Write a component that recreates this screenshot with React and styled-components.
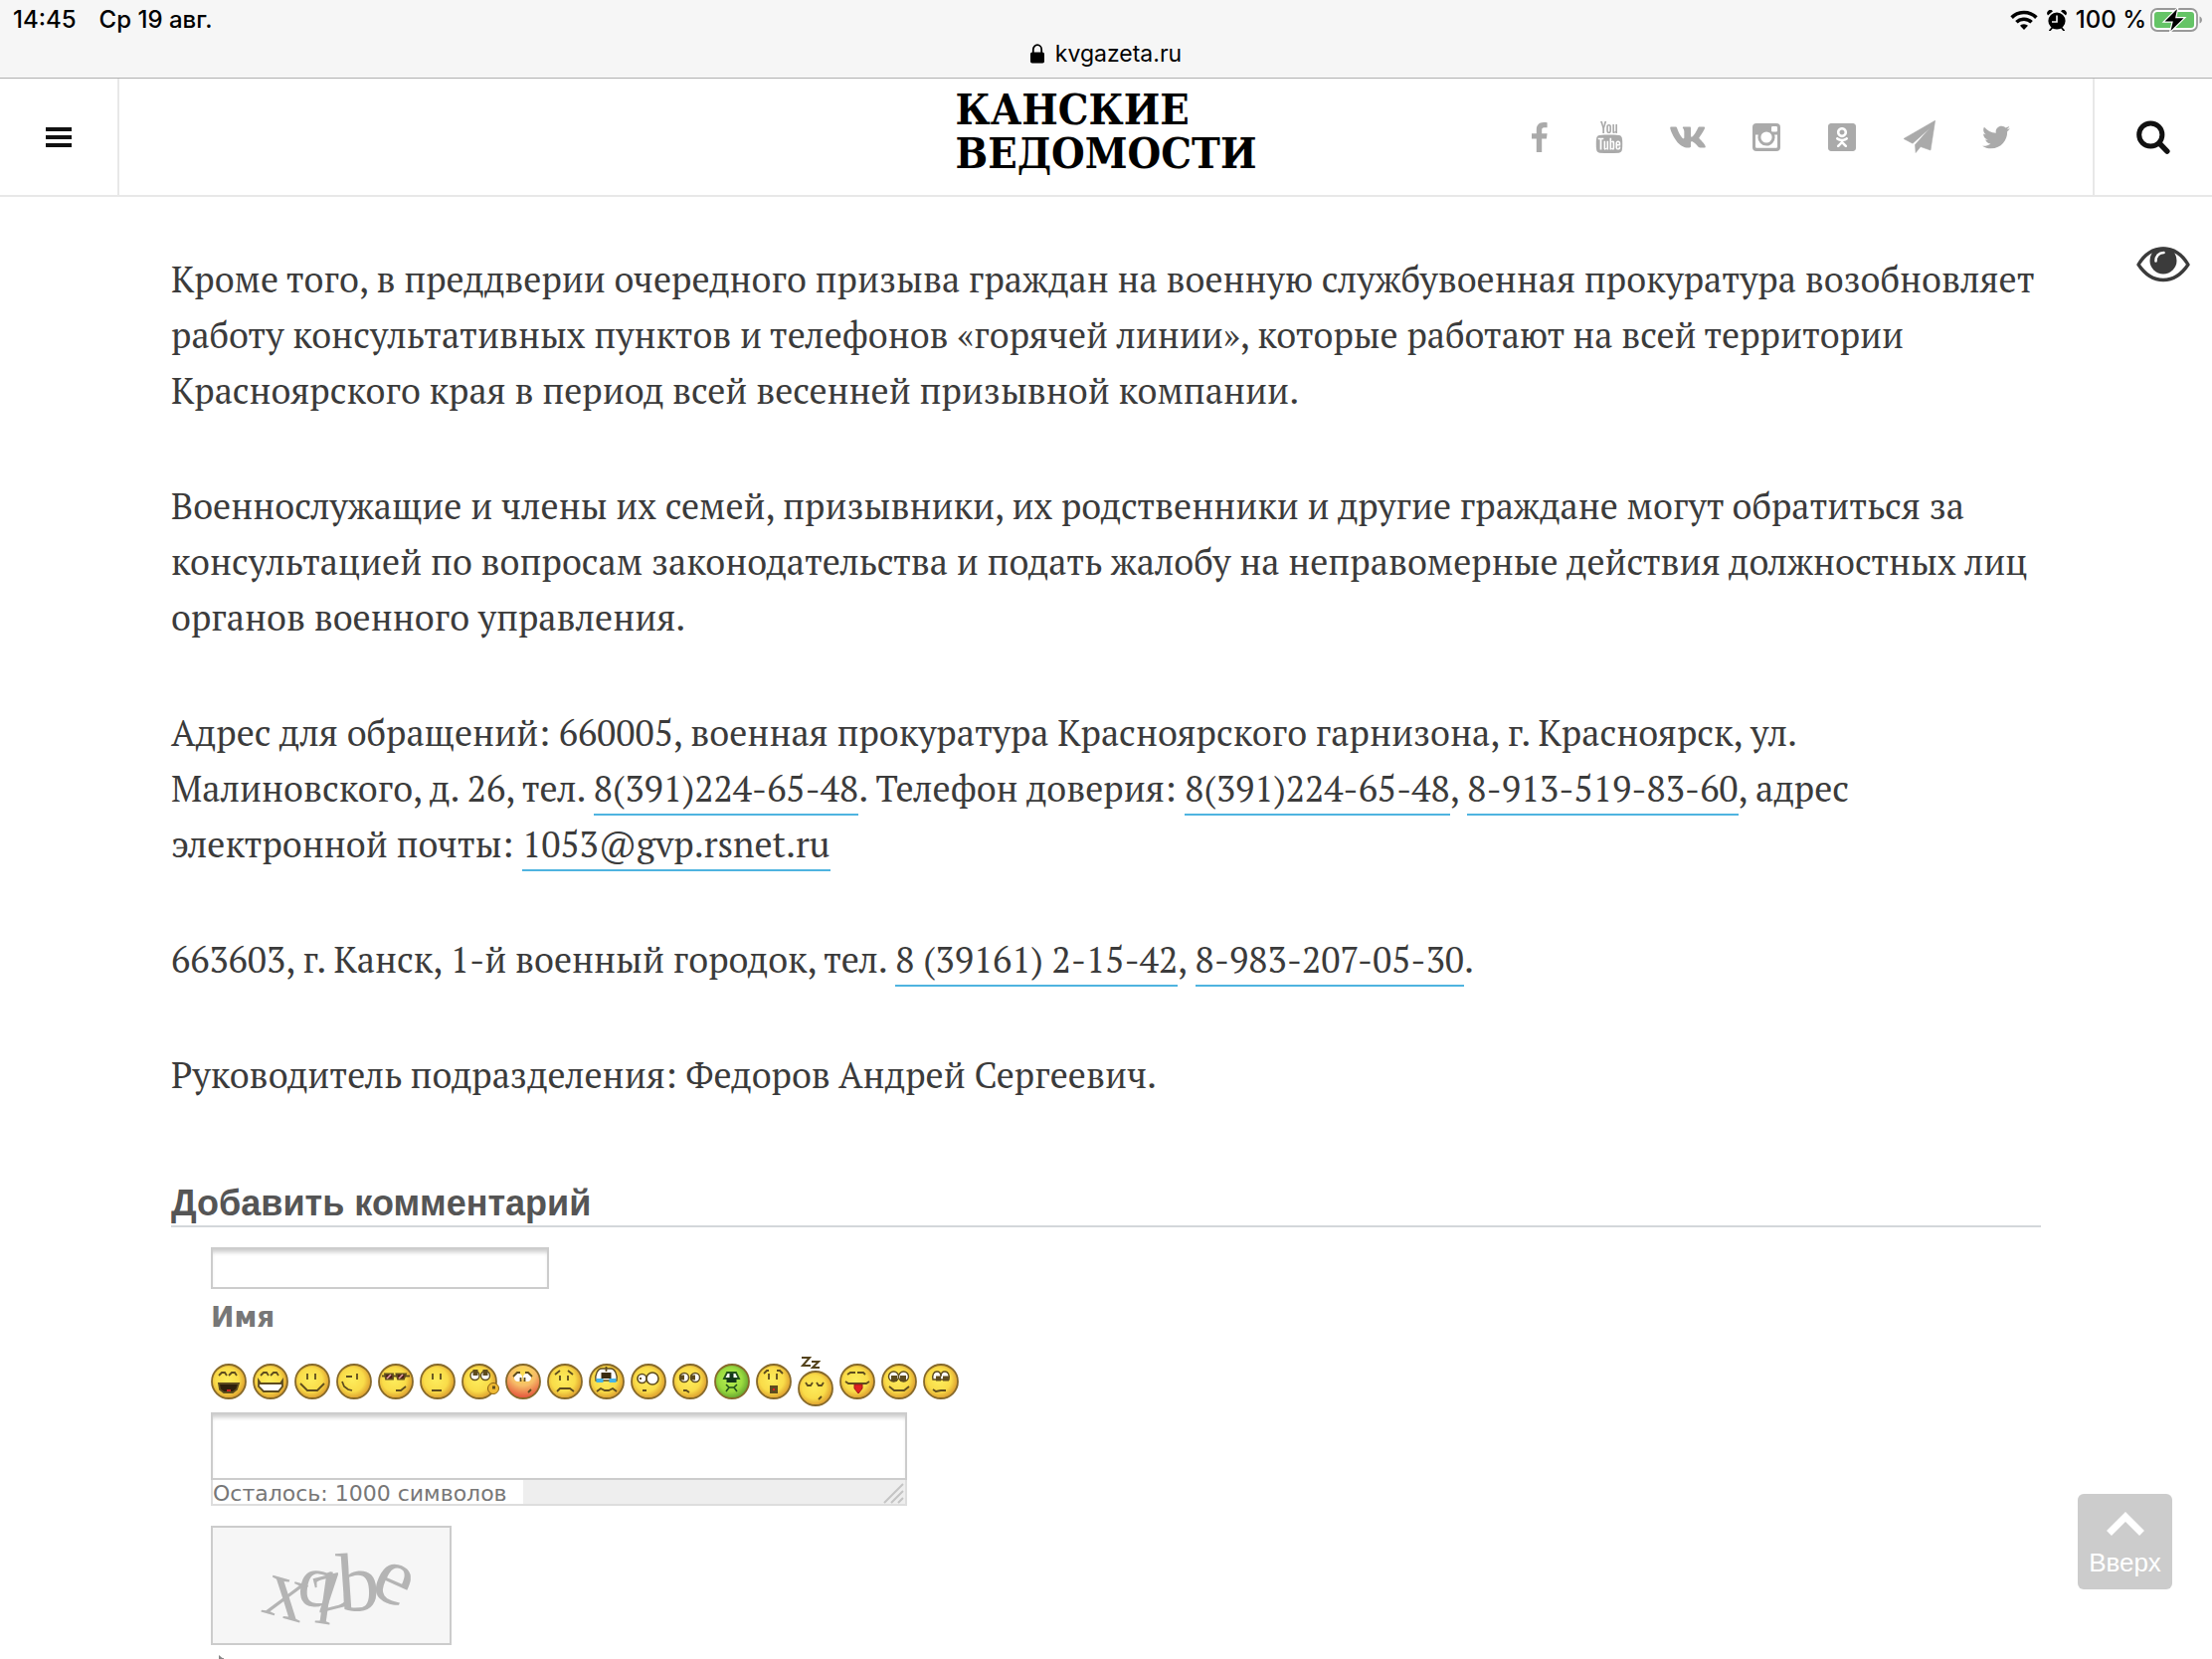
import styled, { createGlobalStyle } from "styled-components";
import { FaOdnoklassnikiSquare, FaTwitter, FaVk } from "react-icons/fa";
import { TfiYoutube } from "react-icons/tfi";

const GlobalStyle = createGlobalStyle`
    * {
        box-sizing: border-box;
    }
    body {
        margin: 0;
        background: #fff;
    }
    button {
        padding: 0;
        border: 0;
        background: none;
        cursor: pointer;
    }
`;

const WifiIcon = () => (
    <svg width="28" height="20" viewBox="0 0 28 20">
        <g fill="none" stroke="#000" strokeWidth="3.6">
            <path d="M1.6 7.6a17.6 17.6 0 0 1 24.8 0" />
            <path d="M6.4 12.3a11 11 0 0 1 15.2 0" />
        </g>
        <path d="M14 20l-4-4.2a5.8 5.8 0 0 1 8 0z" />
    </svg>
);

const AlarmIcon = () => (
    <svg width="20" height="21" viewBox="0 0 20 21">
        <path d="M1 5.4A3.2 3.2 0 0 1 6 1.2zM19 5.4A3.2 3.2 0 0 0 14 1.2z" />
        <path d="M3 20.5l3-3.5M17 20.5l-3-3.5" stroke="#000" strokeWidth="1.8" strokeLinecap="round" />
        <circle cx="10" cy="11" r="8.6" />
        <path d="M10 5.5V12H5" fill="none" stroke="#f6f6f6" strokeWidth="1.6" />
    </svg>
);

const BatteryIcon = () => (
    <svg width="53" height="26" viewBox="0 0 53 26">
        <rect x="1" y="2" width="46" height="22" rx="6" fill="#fff" stroke="#999" strokeWidth="1.8" />
        <rect x="4" y="5" width="40" height="16" rx="3" fill="#65c466" />
        <path d="M49.5 9.5c3.3 1.2 3.3 5.8 0 7z" fill="#999" />
        <path
            d="M27 2L14.5 14.5h8.3L20.5 24 33.5 11.2h-8.4z"
            fill="#000"
            stroke="#fff"
            strokeWidth="2.4"
            paintOrder="stroke"
        />
    </svg>
);

const LockIcon = () => (
    <svg width="14" height="20" viewBox="0 0 14 20">
        <rect x="0" y="8.5" width="14" height="11" rx="1.8" />
        <path d="M2.8 9V5.8a4.2 4.6 0 0 1 8.4 0V9" fill="none" stroke="#000" strokeWidth="1.8" />
    </svg>
);

const MenuIcon = () => (
    <svg width="26" height="20" viewBox="0 0 26 20" fill="#111">
        <path d="M0 0h26v4H0zM0 8h26v4H0zM0 16h26v4H0z" />
    </svg>
);

const SearchIcon = () => (
    <svg width="34" height="34" viewBox="0 0 34 34" fill="none" stroke="#111">
        <circle cx="14.3" cy="14.5" r="11.6" strokeWidth="5" />
        <path d="M23.5 23.5l7.4 7.6" strokeWidth="5.4" strokeLinecap="round" />
    </svg>
);

const FacebookIcon = () => (
    <svg width="16" height="30" viewBox="0 0 16 30" fill="currentColor">
        <path d="M15.6.3v5h-3c-2 0-2.4 1-2.4 2.6v3.4h5.4l-.7 5.2h-4.7v13.4H4.8V16.5H0v-5.2h4.8V7.5C4.8 2.7 7.6 0 12 0c1.6 0 3 .1 3.6.3z" />
    </svg>
);

const InstagramIcon = () => (
    <svg width="28" height="28" viewBox="0 0 28 28">
        <rect width="28" height="28" rx="4" fill="currentColor" />
        <path d="M3 11.5h22v12q0 1.2-1.2 1.2H4.2q-1.2 0-1.2-1.2z" fill="#fff" />
        <circle cx="14" cy="14" r="8.6" fill="currentColor" />
        <circle cx="14" cy="14" r="5.6" fill="#fff" />
        <rect x="19" y="3" width="6" height="5.6" rx="1.3" fill="#fff" />
    </svg>
);

const PlaneIcon = () => (
    <svg width="32" height="33" viewBox="0 0 32 33" fill="currentColor">
        <path
            d="M31.6.3L0 18.5 9 23.2 26.7 7.5 11.5 24.5l.6 8 4.9-6L27 30z"
            strokeWidth=".6"
            stroke="currentColor"
            strokeLinejoin="round"
        />
    </svg>
);

const EyeIcon = () => (
    <svg width="54" height="36" viewBox="0 0 54 36">
        <path
            d="M2 18C8 8 17 2 27 2s19 6 25 16c-6 9-15 15.5-25 15.5S8 27 2 18z"
            fill="#fff"
            stroke="#3b3b3b"
            strokeWidth="3.4"
            strokeLinejoin="round"
        />
        <circle cx="27" cy="14" r="13.5" fill="#3b3b3b" />
        <path d="M19.5 14.5C19.5 9.5 22.5 6 27.5 6" fill="none" stroke="#fff" strokeWidth="2.6" strokeLinecap="round" />
    </svg>
);

const ArrowUpIcon = () => (
    <svg width="38" height="25" viewBox="0 0 38 25">
        <path d="M2.5 21.5L19 5l16.5 16.5" fill="none" stroke="#fff" strokeWidth="7" />
    </svg>
);

const RefreshIcon = () => (
    <svg width="26" height="28" viewBox="0 0 26 28" fill="none" stroke="#888" strokeWidth="4">
        <path d="M3 14a10 10 0 0 1 10-9" />
        <path d="M8 0l6 5-6 6z" fill="#888" stroke="none" />
        <path d="M23 14a10 10 0 0 1-20 1" />
    </svg>
);

const smileArc = "M6 20l7 7h10l7-7";
const grinEyes = "M8 12l3-3h3l2 3M18 12l3-3h3l2 3";
const barEyes = "M13 10v6M21 10v6";

const smilies = [
    {
        name: "Смех",
        draw: (
            <>
                <path d={grinEyes} />
                <path d="M8 20h20l-2 6-4 3h-9l-4-3z" fill="#2e200c" />
                <path d="M16 27h4" stroke="#d22" />
            </>
        ),
    },
    {
        name: "Оскал",
        draw: (
            <>
                <path d={grinEyes} />
                <path d="M6 17l2 3h20l2-3v6l-4 5H11l-5-5z" fill="#fff" />
            </>
        ),
    },
    { name: "Улыбка", draw: <path d={`${barEyes}${smileArc}`} /> },
    { name: "Подмигивание", draw: <path d="M10 13h6M21 10v6M6 18l2 5 4 3 4 1" /> },
    {
        name: "В очках",
        draw: (
            <>
                <path d="M4 12.5h28" />
                <path d="M7 10.5h8v5H8zM18.5 10.5H28l-2 5h-6z" fill="#4a1515" />
                <path d="M9 15l4-4M21 15l4-4" stroke="#e9a7a7" strokeWidth="1.5" />
                <path d="M18 27h5l5-4" />
            </>
        ),
    },
    { name: "Равнодушие", draw: <path d={`${barEyes}M12 27h10`} /> },
    {
        name: "Поцелуй",
        wide: true,
        draw: (
            <>
                <circle cx="32" cy="25" r="5.5" fill="#f0bb35" stroke="#8a6414" strokeWidth="1" />
                <circle cx="13.5" cy="12" r="4.5" fill="#fff" strokeWidth="1.4" />
                <circle cx="24" cy="12" r="4.5" fill="#fff" strokeWidth="1.4" />
                <path d="M14 6v6M24 6v6" strokeWidth="5" />
                <path d="M31 24h3" strokeWidth="3" />
            </>
        ),
    },
    {
        name: "Смущение",
        fill: "url(#blush)",
        draw: (
            <>
                <circle cx="13" cy="14" r="4" fill="#fff" stroke="none" />
                <circle cx="22" cy="14" r="4" fill="#fff" stroke="none" />
                <path d="M8 13l4-4h3M20 9h3l4 4M15.5 14v4M19.5 14v4M23 29l3-3" />
            </>
        ),
    },
    { name: "Грусть", draw: <path d="M8 11l5-4M21 7l5 4M13 12v5M21 12v5M10 28l3-3h10l4 3" /> },
    {
        name: "Слёзы",
        draw: (
            <>
                <path d="M7 17c-1-6 2-12 6-12h9c4 0 7 6 6 12z" fill="#fff" strokeWidth="1.4" />
                <path d="M7.5 17h7M20.5 17h7" stroke="#45b4ea" strokeWidth="4" />
                <path d="M17.5 3v5" />
                <path d="M12.500 9h10v6h-10z" fill="#3b2c10" stroke="none" />
                <path d="M8 28l4-3 4 2h4l4-2 4 3" />
            </>
        ),
    },
    {
        name: "Удивление",
        draw: (
            <>
                <circle cx="11.5" cy="15" r="4.5" fill="#fff" strokeWidth="1.6" />
                <circle cx="22" cy="15" r="6" fill="#fff" strokeWidth="1.6" />
                <path d="M9 15h2M12 27h4" />
            </>
        ),
    },
    {
        name: "Сомнение",
        draw: (
            <>
                <circle cx="12" cy="14" r="4.5" fill="#fff" strokeWidth="1.5" />
                <circle cx="23" cy="14" r="4.5" fill="#fff" strokeWidth="1.5" />
                <path d="M7 14h5M18 14h5" strokeWidth="5" />
                <path d="M11 27h3l3 2" />
            </>
        ),
    },
    {
        name: "Тошнота",
        fill: "url(#sick)",
        draw: (
            <>
                <path d="M10 15l3-6h9l3 6z" fill="#fff" stroke="#22501a" />
                <path d="M12.5 17h10M17.5 10v6" stroke="#14361a" strokeWidth="4" />
                <path d="M12 21l3 3h5l3-3M12 28l3-4M23 28l-3-4" stroke="#22501a" strokeWidth="1.6" />
            </>
        ),
    },
    {
        name: "Шок",
        draw: (
            <>
                <path d="M8 10l3-3h2M21 7h3l3 3M13 10v6M21 10v6" />
                <path d="M15.5 23.5h5v5h-5z" fill="#d22" strokeWidth="3" />
            </>
        ),
    },
    { name: "Сон", sleepy: true, draw: <path d="M8 12l2 3h3l2-3M19 12l2 3h3l2-3M21 29l3-3" /> },
    {
        name: "Язык",
        draw: (
            <>
                <path d="M8 11l3-2h5M18 9h6l2 2M6 18l3 2h18l3-2" />
                <path d="M15 21h8v4l-4 5-4-5z" fill="#e02020" stroke="#a01818" strokeWidth="1" />
            </>
        ),
    },
    {
        name: "Радость",
        draw: (
            <>
                <circle cx="12.5" cy="13" r="5" fill="#fff" strokeWidth="1.4" />
                <circle cx="22.5" cy="13" r="5" fill="#fff" strokeWidth="1.4" />
                <path d="M13 12v6M22 12v6" strokeWidth="6" />
                <path d="M8 23l5 4h10l5-4" />
            </>
        ),
    },
    {
        name: "Закатил глаза",
        draw: (
            <>
                <path d="M10 16c-1-5 1-8 4-8s4 2 4 5c0-3 1-5 4-5s5 3 4 8z" fill="#fff" strokeWidth="1.4" />
                <path d="M13 15h5M20 15h6" strokeWidth="5" />
                <path d="M10 26l3 2 5-1h5" />
            </>
        ),
    },
];

const Smiley = ({ name, fill = "url(#face)", wide, sleepy, draw }) => {
    const top = sleepy ? 14 : 0;
    const width = wide ? 38 : 36;
    return (
        <SmileyButton type="button" aria-label={name}>
            <svg width={width} height={36 + top} viewBox={`0 0 ${width} ${36 + top}`}>
                {sleepy && <path d="M4 1h8L5 9h8M14 5h7l-6 6h7" fill="none" stroke="#54431c" strokeWidth="2" />}
                <g transform={`translate(0 ${top})`} fill="none" stroke="#5e4c1e" strokeWidth="1.8">
                    <circle cx="18" cy="18" r="17" fill={fill} stroke="#86692a" />
                    {draw}
                </g>
            </svg>
        </SmileyButton>
    );
};

const Gradients = () => (
    <Defs aria-hidden="true" width="0" height="0">
        <defs>
            <radialGradient id="face" cx=".45" cy=".45" r=".58">
                <stop offset="0" stopColor="#fdec5c" />
                <stop offset=".6" stopColor="#f9dc49" />
                <stop offset="1" stopColor="#d9962b" />
            </radialGradient>
            <radialGradient id="blush" cx=".5" cy=".25" r=".75">
                <stop offset="0" stopColor="#fbe050" />
                <stop offset=".5" stopColor="#f6bd68" />
                <stop offset="1" stopColor="#e4503a" />
            </radialGradient>
            <radialGradient id="sick" cx=".45" cy=".45" r=".58">
                <stop offset="0" stopColor="#b6ee50" />
                <stop offset=".6" stopColor="#9bdc40" />
                <stop offset="1" stopColor="#5f9f2c" />
            </radialGradient>
        </defs>
    </Defs>
);

const Captcha = () => (
    <CaptchaImage viewBox="0 0 238 116" role="img" aria-label="Код с картинки">
        <g fill="#b4b4b4" fontFamily="'Liberation Serif', serif" textAnchor="middle">
            <text fontSize="84" transform="translate(68 90) rotate(16)">x</text>
            <text fontSize="76" transform="translate(102 79) rotate(8)">q</text>
            <text fontSize="76" transform="translate(122 82) rotate(-14)">z</text>
            <text fontSize="84" transform="translate(148 83) rotate(-4)">b</text>
            <text fontSize="84" transform="translate(173 74) rotate(24)">e</text>
        </g>
    </CaptchaImage>
);

const App = () => {
    return (
        <Page>
            <GlobalStyle />
            <Gradients />
            <StatusBar>
                <StatusRow>
                    <StatusGroup $gap={23}>
                        <span>14:45</span>
                        <span>Ср 19 авг.</span>
                    </StatusGroup>
                    <StatusGroup $gap={9}>
                        <WifiIcon />
                        <AlarmIcon />
                        <Charge>
                            100 %
                            <BatteryIcon />
                        </Charge>
                    </StatusGroup>
                </StatusRow>
                <Address>
                    <LockIcon />
                    kvgazeta.ru
                </Address>
            </StatusBar>
            <Header>
                <MenuButton type="button" aria-label="Меню">
                    <MenuIcon />
                </MenuButton>
                <Logo href="#">
                    <span>КАНСКИЕ</span>
                    <span>ВЕДОМОСТИ</span>
                </Logo>
                <Socials>
                    <SocialLink href="#" aria-label="Facebook" $width={16}><FacebookIcon /></SocialLink>
                    <SocialLink href="#" aria-label="YouTube" $width={28} $icon={32}><TfiYoutube /></SocialLink>
                    <SocialLink href="#" aria-label="ВКонтакте" $width={34} $icon={38}><FaVk /></SocialLink>
                    <SocialLink href="#" aria-label="Instagram" $width={28}><InstagramIcon /></SocialLink>
                    <SocialLink href="#" aria-label="Одноклассники" $width={28} $icon={32}><FaOdnoklassnikiSquare /></SocialLink>
                    <SocialLink href="#" aria-label="Telegram" $width={32}><PlaneIcon /></SocialLink>
                    <SocialLink href="#" aria-label="Twitter" $width={26} $icon={28}><FaTwitter /></SocialLink>
                </Socials>
                <SearchButton type="button" aria-label="Поиск">
                    <SearchIcon />
                </SearchButton>
            </Header>
            <Content>
                <Article>
                    <Paragraph>
                        Кроме того, в преддверии очередного призыва граждан на военную службувоенная прокуратура возобновляет
                        работу консультативных пунктов и телефонов «горячей линии», которые работают на всей территории
                        Красноярского края в период всей весенней призывной компании.
                    </Paragraph>
                    <Paragraph>
                        Военнослужащие и члены их семей, призывники, их родственники и другие граждане могут обратиться за
                        консультацией по вопросам законодательства и подать жалобу на неправомерные действия должностных лиц
                        органов военного управления.
                    </Paragraph>
                    <Paragraph>
                        Адрес для обращений: 660005, военная прокуратура Красноярского гарнизона, г. Красноярск, ул.
                        Малиновского, д. 26, тел. <TextLink href="tel:83912246548">8(391)224-65-48</TextLink>. Телефон
                        доверия: <TextLink href="tel:83912246548">8(391)224-65-48</TextLink>,{" "}
                        <TextLink href="tel:89135198360">8-913-519-83-60</TextLink>, адрес электронной почты:{" "}
                        <TextLink href="mailto:1053@gvp.rsnet.ru">1053@gvp.rsnet.ru</TextLink>
                    </Paragraph>
                    <Paragraph>
                        663603, г. Канск, 1-й военный городок, тел.{" "}
                        <TextLink href="tel:83916121542">8 (39161) 2-15-42</TextLink>,{" "}
                        <TextLink href="tel:89832070530">8-983-207-05-30</TextLink>.
                    </Paragraph>
                    <Paragraph>Руководитель подразделения: Федоров Андрей Сергеевич.</Paragraph>
                </Article>
                <FormTitle>Добавить комментарий</FormTitle>
                <Form>
                    <NameInput id="comment-name" type="text" />
                    <Label htmlFor="comment-name">Имя</Label>
                    <Smilies>
                        {smilies.map((item) => (
                            <Smiley key={item.name} {...item} />
                        ))}
                    </Smilies>
                    <Editor>
                        <CommentArea aria-label="Комментарий" />
                        <EditorFooter>
                            <Counter>Осталось: 1000 символов</Counter>
                            <svg width="22" height="22" viewBox="0 0 22 22" stroke="#c4c4c4" strokeWidth="2">
                                <path d="M1 21L20 2M8 21L20 9M15 21l5-5" />
                            </svg>
                        </EditorFooter>
                    </Editor>
                    <Captcha />
                    <button type="button" aria-label="Обновить">
                        <RefreshIcon />
                    </button>
                </Form>
            </Content>
            <EyeButton type="button" aria-label="Версия для слабовидящих">
                <EyeIcon />
            </EyeButton>
            <TopButton type="button">
                <ArrowUpIcon />
                Вверх
            </TopButton>
        </Page>
    );
};

const Page = styled.div`
    display: flex;
    flex-direction: column;
    height: 100vh;
    overflow: hidden;
    `;
const Defs = styled.svg`
    position: absolute;
    `;
const StatusBar = styled.div`
    flex: none;
    display: flex;
    flex-direction: column;
    gap: 6px;
    padding: 6px 9px 10px 13px;
    background: #f6f6f6;
    border-bottom: 1px solid #b0b0b0;
    color: #000;
    font-family: Inter, sans-serif;
    font-size: 24px;
    line-height: 28px;
    `;
const StatusRow = styled.div`
    display: flex;
    justify-content: space-between;
    font-weight: 500;
    `;
const StatusGroup = styled.div`
    display: flex;
    align-items: center;
    gap: ${(props) => props.$gap}px;
    `;
const Charge = styled.span`
    display: flex;
    align-items: center;
    gap: 4px;
    `;
const Address = styled.div`
    display: flex;
    justify-content: center;
    align-items: center;
    gap: 11px;
    padding-right: 4px;
    font-size: 23px;
    `;
const Header = styled.header`
    flex: none;
    display: grid;
    grid-template-columns: 120px 1fr auto 1fr 120px;
    height: 119px;
    border-bottom: 2px solid #e8e8e8;
    `;
const MenuButton = styled.button`
    display: flex;
    justify-content: center;
    align-items: center;
    && {
        border-right: 2px solid #e8e8e8;
    }
    `;
const SearchButton = styled.button`
    display: flex;
    justify-content: center;
    align-items: center;
    && {
        border-left: 2px solid #e8e8e8;
    }
    `;
const Logo = styled.a`
    grid-column: 3;
    display: flex;
    flex-direction: column;
    justify-content: center;
    color: #000;
    font-family: "DejaVu Serif Condensed", "DejaVu Serif", serif;
    font-size: 43px;
    font-weight: 700;
    line-height: 44px;
    padding-bottom: 12px;
    text-decoration: none;
    `;
const Socials = styled.nav`
    display: flex;
    justify-content: flex-end;
    align-items: center;
    gap: 48px;
    padding-right: 84px;
    `;
const SocialLink = styled.a`
    display: flex;
    justify-content: center;
    width: ${(props) => props.$width}px;
    color: #aaa;
    svg {
        flex: none;
        width: ${(props) => props.$icon && `${props.$icon}px`};
        height: ${(props) => props.$icon && `${props.$icon}px`};
    }
    `;
const Content = styled.main`
    flex: 1;
    min-height: 0;
    overflow: hidden;
    padding: 55px 172px 0;
    `;
const Article = styled.article`
    display: flex;
    flex-direction: column;
    gap: 60px;
    color: #3b3b3b;
    font-family: "PT Serif", "Liberation Serif", serif;
    font-size: 36px;
    line-height: 56px;
    `;
const Paragraph = styled.p`
    margin: 0;
    `;
const TextLink = styled.a`
    color: inherit;
    text-decoration: none;
    white-space: nowrap;
    padding-bottom: 2px;
    border-bottom: 2px solid #4fb4e0;
    `;
const FormTitle = styled.h2`
    margin: 81px 0 20px;
    padding-bottom: 2px;
    border-bottom: 2px solid #d3d7da;
    color: #555;
    font-family: "Liberation Sans", Arial, sans-serif;
    font-size: 36px;
    font-weight: 700;
    line-height: 40px;
    `;
const Form = styled.form`
    display: flex;
    flex-direction: column;
    align-items: flex-start;
    padding-left: 40px;
    font-family: Verdana, "DejaVu Sans", sans-serif;
    `;
const NameInput = styled.input`
    width: 340px;
    height: 42px;
    border: 2px solid #ccc;
    border-radius: 0;
    box-shadow: inset 0 5px 4px -2px #ccc;
    outline: none;
    `;
const Label = styled.label`
    margin: 13px 0 23px;
    color: #777;
    font-size: 28px;
    font-weight: 700;
    line-height: 32px;
    `;
const Smilies = styled.div`
    display: flex;
    align-items: center;
    gap: 6px;
    margin-bottom: 6px;
    `;
const SmileyButton = styled.button`
    display: flex;
    `;
const Editor = styled.div`
    width: 700px;
    margin-bottom: 20px;
    `;
const CommentArea = styled.textarea`
    display: block;
    width: 100%;
    height: 68px;
    border: 2px solid #ccc;
    box-shadow: inset 0 5px 4px -2px #ccc;
    resize: none;
    outline: none;
    `;
const EditorFooter = styled.div`
    display: flex;
    justify-content: space-between;
    align-items: flex-end;
    height: 26px;
    background: #eee;
    border: 2px solid #ddd;
    border-top: 0;
    `;
const Counter = styled.span`
    min-width: 312px;
    padding-top: 4px;
    background: #fff;
    color: #777;
    font-size: 22px;
    line-height: 20px;
    `;
const CaptchaImage = styled.svg`
    width: 242px;
    height: 120px;
    margin-bottom: 10px;
    overflow: visible;
    background: #f6f6f6;
    border: 2px solid #ccc;
    `;
const EyeButton = styled.button`
    position: fixed;
    top: 248px;
    right: 22px;
    display: flex;
    `;
const TopButton = styled.button`
    position: fixed;
    right: 40px;
    bottom: 70px;
    display: flex;
    flex-direction: column;
    align-items: center;
    gap: 10px;
    width: 95px;
    height: 96px;
    && {
        padding-top: 18px;
        background: #ccc;
    }
    border-radius: 6px;
    color: #fff;
    font-family: "Liberation Sans", Arial, sans-serif;
    font-size: 26px;
    line-height: 32px;
    `;

export default App;
